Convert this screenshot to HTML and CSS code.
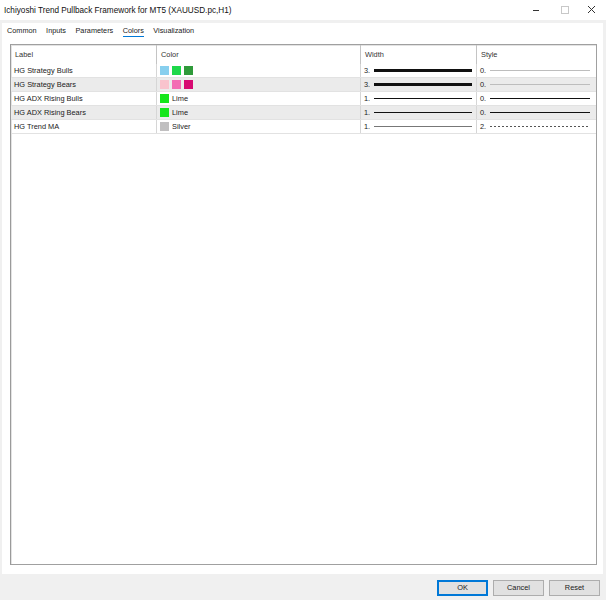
FILE: index.html
```html
<!DOCTYPE html>
<html lang="en">
<head>
  <meta charset="UTF-8">
  <title>Ichiyoshi Trend Pullback Framework for MT5</title>
  <link rel="stylesheet" href="styles.css">
</head>
<body>
  <div class="window">
    <div class="titlebar">
      <span class="title">Ichiyoshi Trend Pullback Framework for MT5 (XAUUSD.pc,H1)</span>
      <div class="controls">
        <svg class="ctl" width="12" height="12" viewBox="0 0 12 12"><path d="M1 6.5h6" stroke="#333" stroke-width="1"/></svg>
        <svg class="ctl" width="12" height="12" viewBox="0 0 12 12"><rect x="2.5" y="2.5" width="7" height="7" fill="none" stroke="#c8c8c8"/></svg>
        <svg class="ctl" width="12" height="12" viewBox="0 0 12 12"><path d="M2 2l7 7M9 2l-7 7" stroke="#333" stroke-width="1"/></svg>
      </div>
    </div>

    <div class="panel">
      <div class="tabs">
        <span class="tab">Common</span>
        <span class="tab">Inputs</span>
        <span class="tab">Parameters</span>
        <span class="tab active">Colors</span>
        <span class="tab">Visualization</span>
      </div>

      <div class="grid-frame">
        <div class="row head">
          <div class="cell">Label</div>
          <div class="cell">Color</div>
          <div class="cell">Width</div>
          <div class="cell">Style</div>
        </div>

        <div class="row">
          <div class="cell">HG Strategy Bulls</div>
          <div class="cell colors">
            <i class="sw" style="background:#87cfee"></i>
            <i class="sw" style="background:#1ed84a"></i>
            <i class="sw" style="background:#2f9a3a"></i>
          </div>
          <div class="cell"><span class="num">3.</span><span class="line w3"></span></div>
          <div class="cell"><span class="num">0.</span><span class="line thin"></span></div>
        </div>

        <div class="row alt">
          <div class="cell">HG Strategy Bears</div>
          <div class="cell colors">
            <i class="sw" style="background:#f9c3cd"></i>
            <i class="sw" style="background:#f36cb4"></i>
            <i class="sw" style="background:#d70a72"></i>
          </div>
          <div class="cell"><span class="num">3.</span><span class="line w3"></span></div>
          <div class="cell"><span class="num">0.</span><span class="line thin"></span></div>
        </div>

        <div class="row">
          <div class="cell">HG ADX Rising Bulls</div>
          <div class="cell colors"><i class="sw" style="background:#15e61b"></i>Lime</div>
          <div class="cell"><span class="num">1.</span><span class="line w1"></span></div>
          <div class="cell"><span class="num">0.</span><span class="line w1"></span></div>
        </div>

        <div class="row alt">
          <div class="cell">HG ADX Rising Bears</div>
          <div class="cell colors"><i class="sw" style="background:#15e61b"></i>Lime</div>
          <div class="cell"><span class="num">1.</span><span class="line w1"></span></div>
          <div class="cell"><span class="num">0.</span><span class="line w1"></span></div>
        </div>

        <div class="row">
          <div class="cell">HG Trend MA</div>
          <div class="cell colors"><i class="sw" style="background:#c0bfc0"></i>Silver</div>
          <div class="cell"><span class="num">1.</span><span class="line w1 grey"></span></div>
          <div class="cell"><span class="num">2.</span><span class="line dash"></span></div>
        </div>
      </div>
    </div>

    <div class="buttons">
      <button class="btn default">OK</button>
      <button class="btn">Cancel</button>
      <button class="btn">Reset</button>
    </div>
  </div>
</body>
</html>
```

FILE: styles.css
```css
* {
  margin: 0;
  padding: 0;
  box-sizing: border-box;
  font-family: 'Liberation Sans', Arial, sans-serif;
}

body {
  background-color: #f0f0f0;
  color: #1a1a1a;
  font-size: 7.4px;
}

.window {
  width: 606px;
  height: 600px;
  display: flex;
  flex-direction: column;
  background-color: #f0f0f0;
}

.titlebar {
  height: 20px;
  background-color: #fff;
  display: flex;
  align-items: center;
  justify-content: space-between;
  padding-left: 4px;
  flex-shrink: 0;
}

.title {
  font-size: 8.2px;
  color: #111;
}

.controls {
  display: flex;
  gap: 15px;
  padding-right: 8px;
}

.ctl {
  display: block;
}

.panel {
  flex: 1;
  margin: 3px 3px 0 2px;
  background-color: #fff;
  display: flex;
  flex-direction: column;
  padding: 0 6px 9px 8px;
}

/* tab strip above the grid */
.tabs {
  height: 21px;
  display: flex;
  gap: 9.5px;
  padding-top: 3px;
  margin-left: -3px;
  flex-shrink: 0;
}

.tab {
  height: 11px;
  line-height: 10px;
  font-size: 7.3px;
  color: #1a1a1a;
}

.tab.active {
  border-bottom: 1px solid #0078d7;
}

.grid-frame {
  flex: 1;
  border: 1px solid #a0a0a0;
  border-left-color: #9a9a9a;
  box-shadow: inset 1px 1px 0 #e3e3e3;
  background-color: #fff;
}

.row {
  display: grid;
  grid-template-columns: 146px 204px 116px 1fr;
  height: 14px;
  border-bottom: 1px solid #e2e2e2;
}

.row.head {
  height: 19px;
  border-bottom: none;
  color: #333;
}

.row.alt {
  background-color: #ebebeb;
}

.cell {
  display: flex;
  align-items: center;
  padding-left: 3px;
  border-right: 1px solid #d6d6d6;
  white-space: nowrap;
  overflow: hidden;
}

.cell:last-child {
  border-right: none;
}

.row.head .cell {
  border-right-color: #c4c4c4;
  padding-left: 4px;
}

.colors {
  gap: 3px;
}

.sw {
  display: block;
  width: 9px;
  height: 9px;
}

.num {
  width: 10px;
  flex-shrink: 0;
}

.line {
  display: block;
  height: 1px;
  background-color: #111;
  width: 98px;
}

.cell:last-child .line {
  width: 100px;
}

.line.w3 {
  height: 3px;
}

.line.thin {
  background-color: #bdbdbd;
}

.line.grey {
  background-color: #777;
}

.line.dash {
  background: repeating-linear-gradient(90deg, #555 0 2px, transparent 2px 4px);
}

.buttons {
  height: 26px;
  display: flex;
  justify-content: flex-end;
  align-items: center;
  gap: 5px;
  padding: 1px 6px 0 0;
  flex-shrink: 0;
}

.btn {
  width: 51px;
  height: 16px;
  font-size: 7.4px;
  color: #1a1a1a;
  background-color: #e1e1e1;
  border: 1px solid #adadad;
}

.btn.default {
  border-color: #0078d7;
  box-shadow: inset 0 0 0 1px #0078d7;
}
```
